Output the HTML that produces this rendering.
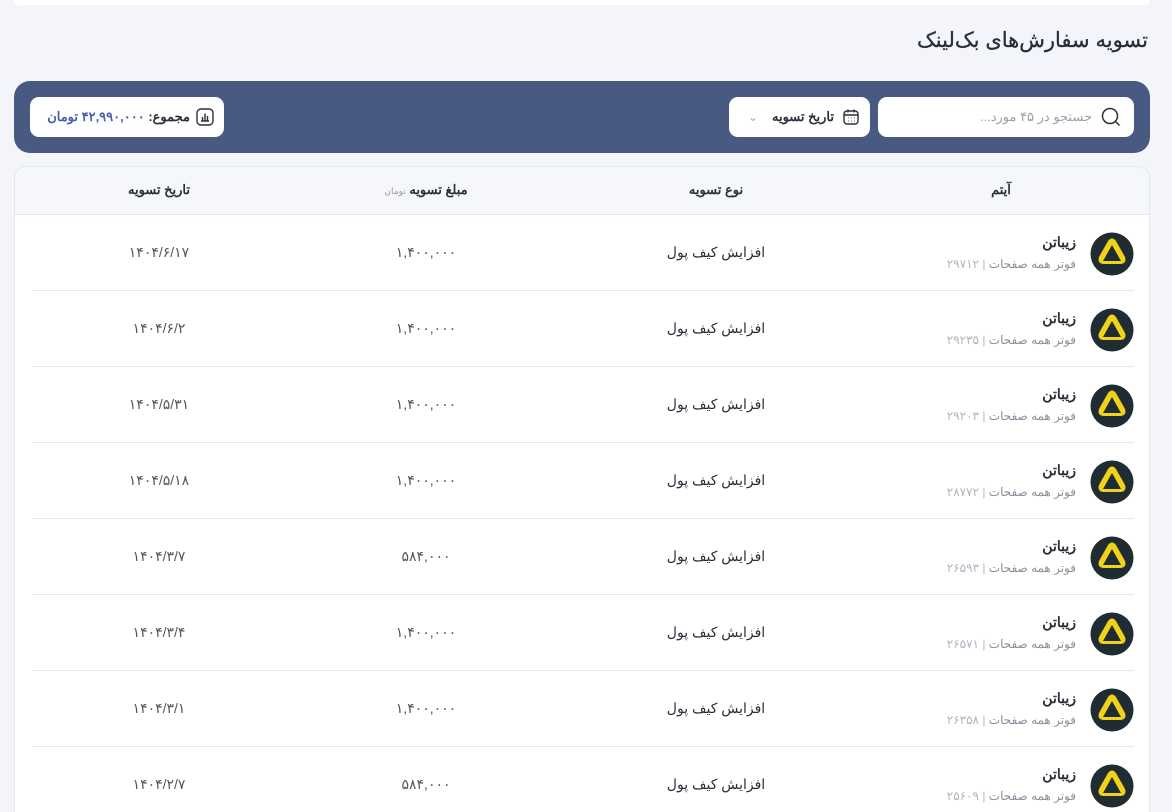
<!DOCTYPE html>
<html lang="fa" dir="rtl"><head><meta charset="utf-8">
<style>
*{box-sizing:border-box;margin:0;padding:0}
html,body{width:1172px;height:812px;overflow:hidden}
body{background:#f3f5fa;font-family:"Liberation Sans","Noto Sans CJK SC",sans-serif;color:#2b2f3a;position:relative}
.top{position:absolute;left:14px;top:0;width:1136px;height:5px;background:#fff;border-radius:0 0 8px 8px}
h1{position:absolute;right:24px;top:28px;font-size:21px;font-weight:normal;color:#2a2e38;-webkit-text-stroke:0.3px #2a2e38}
.panel{position:absolute;left:14px;top:81px;width:1136px;height:72px;background:#485a82;border-radius:16px}
.box{position:absolute;background:#fff;border-radius:9px;height:40px;top:16px;display:flex;align-items:center;font-size:13px}
.search{right:16px;width:256px;padding-right:12px;color:#9aa0ab}
.date{right:280px;width:141px;padding-right:10px;color:#2b2f3a}
.total{left:16px;width:194px;padding-right:10px;color:#2b2f3a}
.table{position:absolute;left:14px;top:166px;width:1136px;height:646px;background:#fff;border:1px solid #e3e6ee;border-bottom:none;border-radius:12px 12px 0 0;overflow:hidden}
.th{height:48px;background:#f5f7fb;border-bottom:1px solid #e3e6ee;position:relative;font-size:13px;font-weight:bold}
.c{position:absolute;text-align:center;transform:translateX(-50%)}
.row{position:absolute;left:17px;width:1102px;height:76px;border-bottom:1px solid #e6e8ee;font-size:14px}
.logo{position:absolute;right:0;top:17px;width:44px;height:44px}
.name{position:absolute;right:58px;top:19px;font-size:14px;font-weight:bold;color:#2b2f3a}
.sub{position:absolute;right:58px;top:42px;font-size:12px;color:#8a909c;white-space:nowrap}
.sub b{font-weight:normal;color:#b0b5c0}
</style></head><body>
<div class="top"></div>
<h1>تسویه سفارش‌های بک‌لینک</h1>
<div class="panel">
 <div class="box search"><svg width="22" height="22" viewBox="0 0 22 22" fill="none" stroke="#2b2f3a" stroke-width="1.5"><circle cx="10" cy="10" r="7.5"/><path d="M15.5 15.5l4 4"/></svg><span style="margin-right:8px">جستجو در ۴۵ مورد...</span></div>
 <div class="box date"><svg width="18" height="18" viewBox="0 0 18 18" fill="none" stroke="#2b2f3a" stroke-width="1.4"><rect x="2" y="3" width="14" height="13" rx="3"/><path d="M2 7h14M6 1.5v3M12 1.5v3"/><path d="M6 10h.5M9 10h.5M12 10h.5M6 13h.5M9 13h.5M12 13h.5" stroke-width="1.6"/></svg><span style="margin-right:8px;font-weight:bold">تاریخ تسویه</span><span style="margin-right:14px;color:#aab;font-size:12px">&#8964;</span></div>
 <div class="box total"><svg width="18" height="18" viewBox="0 0 18 18" fill="none" stroke="#2b2f3a" stroke-width="1.4"><rect x="1" y="1" width="16" height="16" rx="4"/><path d="M5 13h8M6.5 13V9M9 13V5.5M11.5 13V8"/></svg><span style="margin-right:6px;font-weight:bold">مجموع: <span style="color:#4a5fb0">۴۲,۹۹۰,۰۰۰ تومان</span></span></div>
</div>
<div class="table">
 <div class="th">
  <span class="c" style="left:986px;top:15px">آیتم</span>
  <span class="c" style="left:701px;top:15px">نوع تسویه</span>
  <span class="c" style="left:411px;top:15px;white-space:nowrap">مبلغ تسویه <span style="font-size:9px;color:#999;font-weight:normal">تومان</span></span>
  <span class="c" style="left:144px;top:15px">تاریخ تسویه</span>
 </div>
 <div id="rows"></div>
</div>
<script>
var d=[["۲۹۷۱۲","۱,۴۰۰,۰۰۰","۱۴۰۴/۶/۱۷"],["۲۹۲۳۵","۱,۴۰۰,۰۰۰","۱۴۰۴/۶/۲"],["۲۹۲۰۳","۱,۴۰۰,۰۰۰","۱۴۰۴/۵/۳۱"],["۲۸۷۷۲","۱,۴۰۰,۰۰۰","۱۴۰۴/۵/۱۸"],["۲۶۵۹۳","۵۸۴,۰۰۰","۱۴۰۴/۳/۷"],["۲۶۵۷۱","۱,۴۰۰,۰۰۰","۱۴۰۴/۳/۴"],["۲۶۳۵۸","۱,۴۰۰,۰۰۰","۱۴۰۴/۳/۱"],["۲۵۶۰۹","۵۸۴,۰۰۰","۱۴۰۴/۲/۷"]];
var h="";
d.forEach(function(r,i){
h+='<div class="row" style="top:'+(48+i*76)+'px">'+
'<svg class="logo" viewBox="0 0 44 44"><circle cx="22" cy="22" r="21.5" fill="#1f2d33"/><path d="M18 9 Q22 4 26 9 L35 25 Q37 31 31 32 L13 32 Q7 31 9 25 Z" fill="#f1d21a"/><path d="M22 13 L31 29 L13 29 Z" fill="#1f2d33"/></svg>'+
'<span class="name">زیباتن</span><span class="sub">فوتر همه صفحات <b>| '+r[0]+'</b></span>'+
'<span class="c" style="left:684px;top:29px">افزایش کیف پول</span>'+
'<span class="c" style="left:394px;top:29px;color:#555">'+r[1]+'</span>'+
'<span class="c" style="left:127px;top:29px;color:#555">'+r[2]+'</span></div>';});
document.getElementById("rows").innerHTML=h;
</script>
</body></html>
